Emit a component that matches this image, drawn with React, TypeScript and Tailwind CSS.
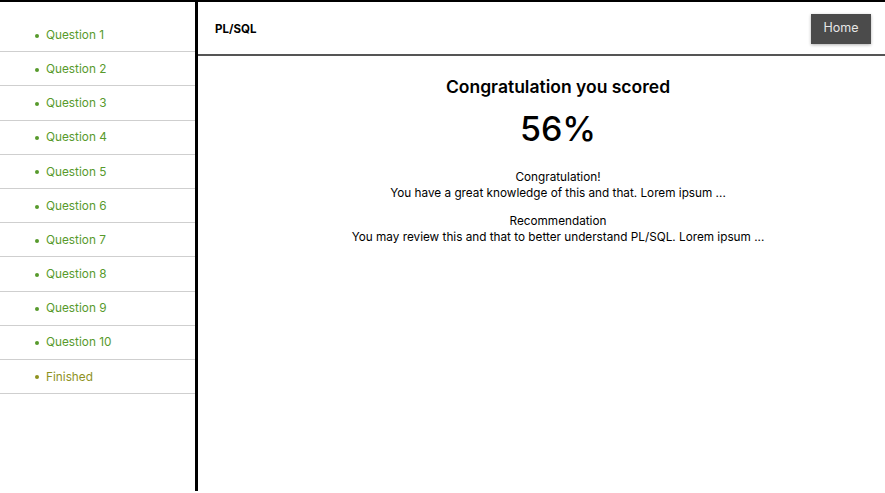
import React from "react";

const items = [
  "Question 1",
  "Question 2",
  "Question 3",
  "Question 4",
  "Question 5",
  "Question 6",
  "Question 7",
  "Question 8",
  "Question 9",
  "Question 10",
];

export default function App() {
  return (
    <div
      className="flex h-[491px] border-t-2 border-black bg-white text-black"
      style={{ fontFamily: "Inter, 'Noto Sans', sans-serif" }}
    >
      <aside className="w-[198px] shrink-0 border-r-[3px] border-black pt-[16px]">
        {items.map((item) => (
          <div
            key={item}
            className="flex h-[34.2px] items-center border-b border-[#cfcfcf] pl-[35px] pt-[2px] text-[11.8px] text-[#579a2c]"
          >
            <span className="mr-[7px] h-[4px] w-[4px] rounded-full bg-[#579a2c]" />
            {item}
          </div>
        ))}
        <div className="flex h-[34.2px] items-center border-b border-[#cfcfcf] pl-[35px] pt-[2px] text-[11.8px] text-[#8e921e]">
          <span className="mr-[7px] h-[4px] w-[4px] rounded-full bg-[#8e921e]" />
          Finished
        </div>
      </aside>
      <main className="flex flex-1 flex-col">
        <header className="flex h-[54px] items-center justify-between border-b-2 border-[#555] pl-[17px] pr-[14px]">
          <span className="mt-[3px] text-[11.5px] font-bold">PL/SQL</span>
          <button className="mt-[1px] h-[30px] w-[60px] bg-[#4b4b4b] text-[12.5px] text-[#e6e6e6] shadow-[0_1px_3px_rgba(0,0,0,0.3)]">
            Home
          </button>
        </header>
        <section className="flex flex-col items-center pl-[33px] pt-[19px] text-center">
          <h1 className="text-[17.5px] font-semibold leading-[24px]">
            Congratulation you scored
          </h1>
          <p className="mt-[6px] text-[34px] font-medium leading-[48px]">56%</p>
          <div className="mt-[17px] text-[11.75px] leading-[15.5px]">
            <p>Congratulation!</p>
            <p>You have a great knowledge of this and that. Lorem ipsum ...</p>
          </div>
          <div className="mt-[13px] text-[11.75px] leading-[15.5px]">
            <p>Recommendation</p>
            <p>
              You may review this and that to better understand PL/SQL. Lorem
              ipsum ...
            </p>
          </div>
        </section>
      </main>
    </div>
  );
}
